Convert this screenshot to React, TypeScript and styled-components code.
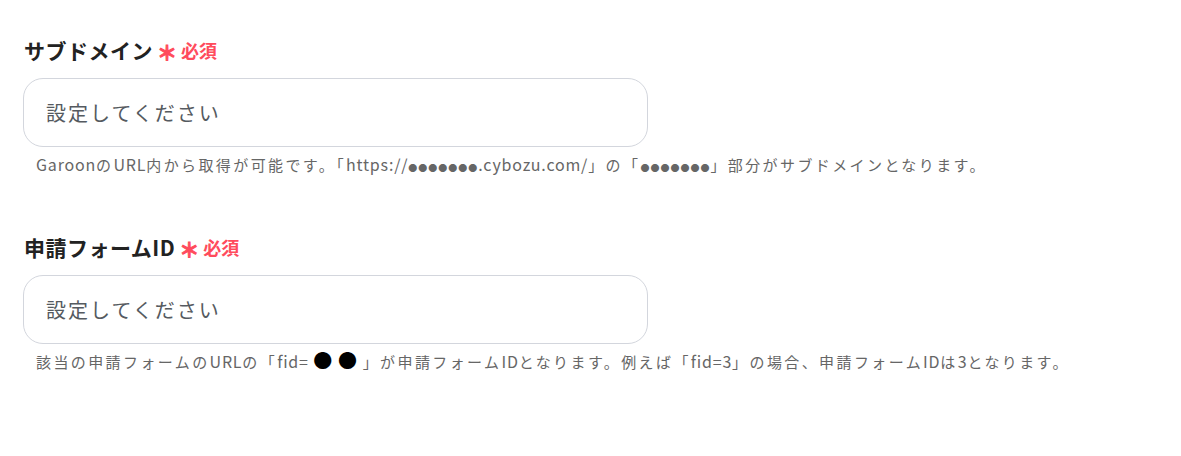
import React from "react";
import styled, { createGlobalStyle } from "styled-components";

const GlobalStyle = createGlobalStyle`
  body {
    margin: 0;
    background: #ffffff;
    font-family: "Noto Sans CJK JP", "Noto Sans", sans-serif;
    color: #222222;
  }
`;

const Page = styled.div`
  padding: 35px 24px 0 23px;
  display: flex;
  flex-direction: column;
  gap: 55px;
`;

const Field = styled.div`
  display: flex;
  flex-direction: column;
`;

const Label = styled.div`
  display: flex;
  align-items: center;
  gap: 4px;
  font-size: 21px;
  letter-spacing: 0.5px;
  font-weight: 700;
  line-height: 30px;
  color: #222222;
  padding-left: 1px;
`;

const Required = styled.span`
  display: inline-flex;
  align-items: center;
  gap: 4px;
  color: #ff4b5c;
  font-size: 18px;
  letter-spacing: 0;
  font-weight: 700;
`;

const Asterisk = styled.span`
  font-size: 20px;
  line-height: 1;
  -webkit-text-stroke: 1px #ff4b5c;
  transform: translateY(3px);
`;

const Input = styled.input`
  box-sizing: border-box;
  margin-top: 13px;
  width: 625px;
  height: 69px;
  border: 1px solid #d3d6dd;
  border-radius: 20px;
  padding: 0 22px;
  font-family: "Noto Sans CJK JP", "Noto Sans", sans-serif;
  font-size: 20px;
  letter-spacing: 2px;
  color: #333333;
  outline: none;
  &::placeholder {
    color: #555a60;
  }
`;

const Help = styled.p`
  margin: 6px 0 0 13px;
  font-size: 15px;
  letter-spacing: 2.4px;
  line-height: 24px;
  height: 24px;
  color: #666666;
`;

const Latin = styled.span`
  font-size: 16px;
  line-height: 1;
  letter-spacing: 0.8px;
`;

const Dot = styled.span<{ $big?: boolean }>`
  color: ${(p) => (p.$big ? "#000000" : "#666666")};
  font-size: ${(p) => (p.$big ? "19px" : "9px")};
  line-height: 1;
  letter-spacing: ${(p) => (p.$big ? "0" : "1px")};
`;

export default function App() {
  return (
    <>
      <GlobalStyle />
      <Page>
        <Field>
          <Label>
            サブドメイン
            <Required>
              <Asterisk>＊</Asterisk>必須
            </Required>
          </Label>
          <Input placeholder="設定してください" />
          <Help>
            <Latin>Garoon</Latin>の<Latin>URL</Latin>内から取得が可能です。「
            <Latin>https://</Latin>
            <Dot>●●●●●●●</Dot>
            <Latin>.cybozu.com/</Latin>」の「<Dot>●●●●●●●</Dot>
            」部分がサブドメインとなります。
          </Help>
        </Field>
        <Field>
          <Label>
            申請フォームID
            <Required>
              <Asterisk>＊</Asterisk>必須
            </Required>
          </Label>
          <Input placeholder="設定してください" />
          <Help>
            該当の申請フォームの<Latin>URL</Latin>の「<Latin>fid= </Latin>
            <Dot $big>●</Dot> <Dot $big>●</Dot> 」が申請フォーム<Latin>ID</Latin>
            となります。例えば「<Latin>fid=3</Latin>
            」の場合、申請フォーム<Latin>ID</Latin>は<Latin>3</Latin>となります。
          </Help>
        </Field>
      </Page>
    </>
  );
}
